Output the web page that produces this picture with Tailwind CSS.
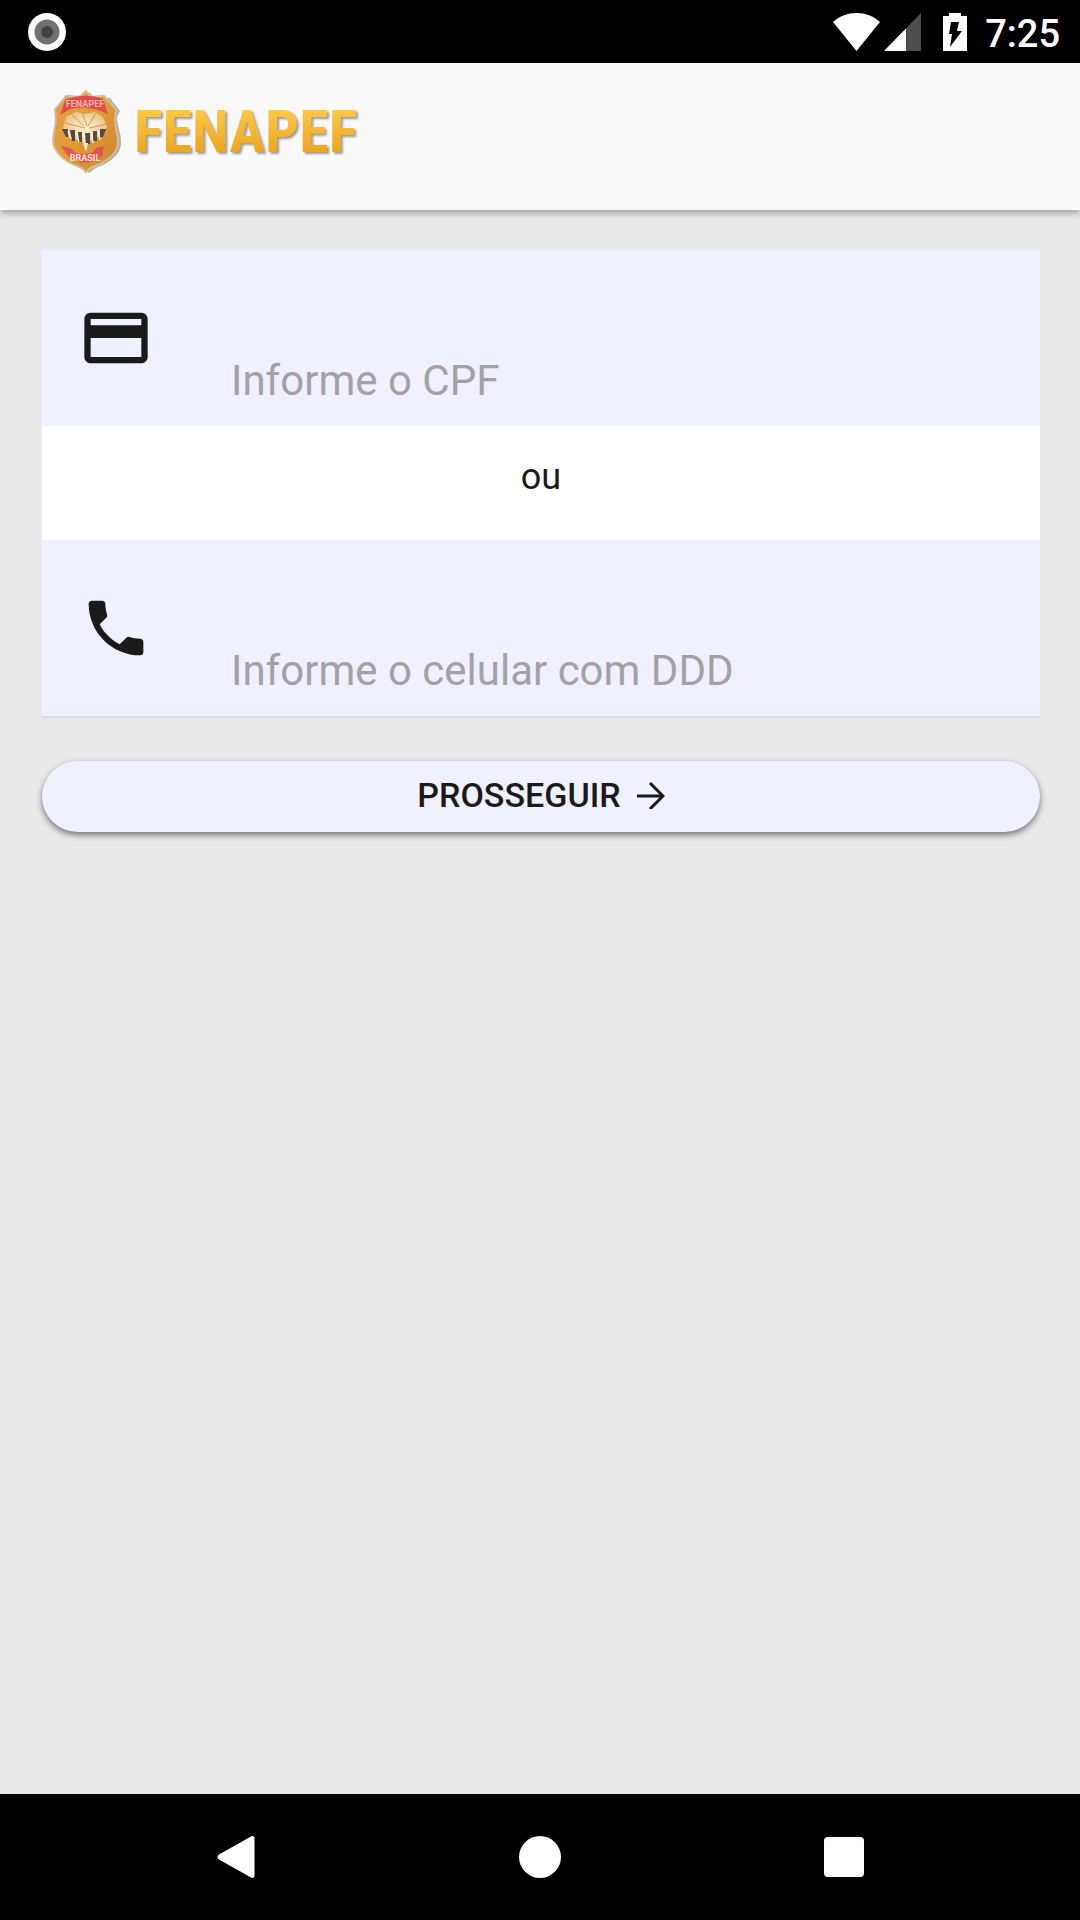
<!DOCTYPE html>
<html lang="pt-BR">
  <head>
    <meta charset="UTF-8" />
    <meta name="viewport" content="width=device-width, initial-scale=1.0" />
    <title>FENAPEF</title>
    <script src="https://cdn.jsdelivr.net/npm/@tailwindcss/browser@4"></script>
  </head>
  <body class="min-h-screen flex flex-col bg-[#e9e9e9] text-[#1a1a1a] font-['Roboto',sans-serif]">
    <!-- Status bar -->
    <div class="h-[63px] shrink-0 bg-black text-white flex items-center justify-between pl-7 pr-5">
      <svg class="w-[38px] h-[38px]" viewBox="0 0 38 38" aria-hidden="true">
        <circle cx="19" cy="19" r="19" fill="#fff" />
        <circle cx="19" cy="19" r="12.5" fill="#717171" />
        <circle cx="19" cy="19" r="6" fill="#424242" />
      </svg>
      <div class="flex items-center">
        <svg class="w-[47px] h-[38px]" viewBox="0 0 47 38" fill="#fff" aria-hidden="true">
          <path d="M0 9C13-3 34-3 47 9L23.500 38z" />
        </svg>
        <svg class="w-[37px] h-[38px] ml-1" viewBox="0 0 37 38" aria-hidden="true">
          <path d="M37 0v38H0z" fill="#4d4d4d" />
          <path d="M22 15.500V38H0z" fill="#fff" />
        </svg>
        <svg class="w-6 h-[38px] ml-[22px]" viewBox="0 0 24 38" aria-hidden="true">
          <path d="M6 0h12v3h6v35H0V3h6z" fill="#fff" />
          <path d="M8 9h8l-2 9h5L7 34l2-13H6z" fill="#000" />
        </svg>
        <span class="ml-[18px] pt-1 text-[38px] leading-[44px] font-medium">7:25</span>
      </div>
    </div>

    <!-- App header -->
    <header class="relative h-[147px] shrink-0 bg-[#f9f9f9] flex items-start pl-[51px] pt-[27px] shadow-[0_2px_8px_rgba(0,0,0,0.4)]">
      <svg class="w-[71px] h-[84px]" viewBox="0 0 71 84" aria-hidden="true">
        <defs>
          <linearGradient id="gold" x1="0" y1="0" x2="1" y2="1">
            <stop offset="0" stop-color="#e0a048" />
            <stop offset="0.5" stop-color="#e39a35" />
            <stop offset="1" stop-color="#c98432" />
          </linearGradient>
          <radialGradient id="glow">
            <stop offset="0" stop-color="#fff3cf" />
            <stop offset="1" stop-color="#ecc48c" />
          </radialGradient>
        </defs>
        <path d="M38 2l5 5 16 1 10 13-3 6c0 9 5 18 4 27-1 13-15 20-25 24l-7 5-6-5z" fill="#b5b0a8" />
        <path d="M35 1l4 5c5 2 10-1 14 0l9 10c2 2 4 3 3 6-3 11 2 21 2 29 0 13-12 21-23 25-4 1-6 3-9 6-3-3-5-5-9-6C15 72 2 63 2 50c0-8 5-18 2-29-1-2 1-3 3-5l8-10c5-1 10 2 15 0z" fill="url(#gold)" stroke="#d4bd9b" stroke-width="2" />
        <path d="M14 10Q35 2 52 9L57 24 50 21Q34 15 19 19L9 25z" fill="#e34a49" />
        <path d="M10 56l9 2q14 9 26 0l8-2-2 10q-16 13-34 0z" fill="#e2564c" />
        <path d="M19 56q14 9 26 0l-3 6q-9 4-19 0z" fill="#dd9638" />
        <path d="M12 38l3-11 10-5 10 2 9-2 8 5 4 10-9 10-12 6-13-4z" fill="url(#glow)" />
        <path d="M18 22l15 14M31 22l5 14M45 23l-8 13M14 33l20 5M56 34l-18 4" stroke="#cb965e" stroke-width="1" />
        <path d="M11 39h6v8h-2zM19 40h5v11h-3zM27 42h4v10h-3zM34 43h5v11h-4zM42 41h4v10h-4zM49 39h6l-3 8h-3z" fill="#504b44" />
        <path d="M17 41l3 8M25 42l3 10M32 43l2 12M40 42l2 11M47 41l2 9" stroke="#fff4df" stroke-width="1.500" />
        <path d="M32 53h5l-2 9z" fill="#fff3dc" />
        <text x="34" y="17" font-size="9" font-weight="700" text-anchor="middle" fill="#f4b5ab">FENAPEF</text>
        <text x="34" y="71" font-size="9" font-weight="700" text-anchor="middle" fill="#ffe1d5">BRASIL</text>
      </svg>
      <span class="ml-3 mt-1 text-[60px] leading-[76px] font-bold font-['Roboto_Condensed',sans-serif] text-transparent bg-clip-text bg-linear-to-b from-[#ffc843] from-20% to-[#eaa41b] to-80% drop-shadow-[2px_2px_1px_rgba(90,90,90,0.6)]">FENAPEF</span>
    </header>

    <main class="grow pl-[42px] pr-10 pt-10">
      <form>
        <div class="bg-white shadow-[0_2px_0_#dedee2]">
          <div class="flex items-end bg-[#f1f0ff] px-9 pt-[106px] pb-5">
            <label for="cpf" class="-mt-[56px] mb-[30px]">
              <svg class="w-[76px] h-[76px]" viewBox="0 0 24 24" fill="currentColor" role="img" aria-label="CPF">
                <path d="M20 4H4c-1.110 0-1.990.890-1.990 2L2 18c0 1.110.890 2 2 2h16c1.110 0 2-.890 2-2V6c0-1.110-.890-2-2-2zm0 14H4v-6h16v6zm0-10H4V6h16v2z" />
              </svg>
            </label>
            <input id="cpf" type="text" inputmode="numeric" placeholder="Informe o CPF" class="grow min-w-0 ml-[77px] h-[50px] text-[42px] leading-[50px] outline-none placeholder:text-[#a2a2a4]" />
          </div>
          <p class="pt-[30px] pb-[42px] text-center text-[36px] leading-[42px]">ou</p>
          <div class="flex items-end bg-[#f1f0ff] px-9 pt-[106px] pb-5">
            <label for="celular" class="-mt-[56px] mb-[30px]">
              <svg class="w-[76px] h-[76px]" viewBox="-0.500 -0.500 25 25" fill="currentColor" role="img" aria-label="Celular">
                <path d="M6.620 10.790c1.440 2.830 3.760 5.140 6.590 6.590l2.200-2.200c.270-.270.670-.360 1.020-.240 1.120.370 2.330.570 3.570.570.550 0 1 .450 1 1V20c0 .550-.450 1-1 1-9.390 0-17-7.610-17-17 0-.550.450-1 1-1h3.500c.550 0 1 .450 1 1 0 1.250.200 2.450.570 3.570.110.350.030.740-.250 1.020l-2.200 2.200z" />
              </svg>
            </label>
            <input id="celular" type="tel" placeholder="Informe o celular com DDD" class="grow min-w-0 ml-[77px] h-[50px] text-[42px] leading-[50px] outline-none placeholder:text-[#a2a2a4]" />
          </div>
        </div>

        <button type="button" class="mt-[45px] w-full h-[71px] rounded-full bg-[#f1f0ff] flex items-center justify-center gap-4 pb-1 text-[34px] leading-[40px] font-medium shadow-[0_3px_6px_rgba(0,0,0,0.5)]">
          PROSSEGUIR
          <svg class="w-7 h-7" viewBox="0 0 28 28" fill="none" stroke="currentColor" stroke-width="3" aria-hidden="true">
            <path d="M0 15h26M13 2l13 13-13 13" />
          </svg>
        </button>
      </form>
    </main>

    <!-- Navigation bar -->
    <nav class="h-[126px] shrink-0 bg-black text-white flex items-center justify-center gap-52">
      <button type="button" aria-label="Voltar" class="w-24 h-24 flex items-center justify-center">
        <svg class="w-[38px] h-[42px]" viewBox="0 0 38 42" fill="currentColor">
          <path d="M34 .500Q37.500-1 37.500 3V39Q37.500 43 34 41.500L2 23.500Q-1 21 2 18.500z" />
        </svg>
      </button>
      <button type="button" aria-label="Início" class="w-24 h-24 flex items-center justify-center">
        <span class="w-[42px] h-[42px] rounded-full bg-white"></span>
      </button>
      <button type="button" aria-label="Recentes" class="w-24 h-24 flex items-center justify-center">
        <span class="w-10 h-10 rounded-sm bg-white"></span>
      </button>
    </nav>
  </body>
</html>
